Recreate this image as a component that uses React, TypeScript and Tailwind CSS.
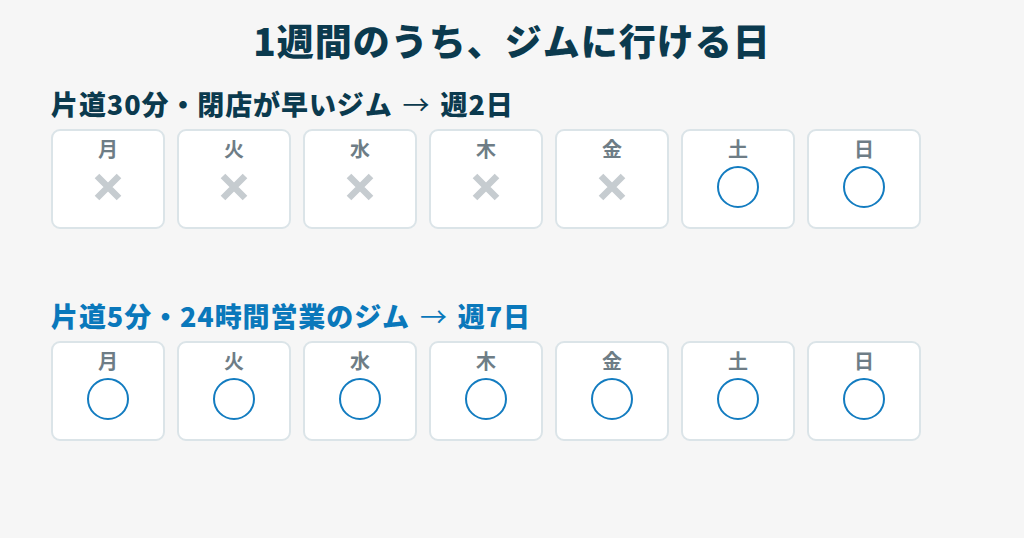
const days = ['月', '火', '水', '木', '金', '土', '日'];

const rows = [
  {
    label: '片道30分・閉店が早いジム',
    result: '週2日',
    color: 'text-[#0b3a4e]',
    open: [false, false, false, false, false, true, true],
  },
  {
    label: '片道5分・24時間営業のジム',
    result: '週7日',
    color: 'text-[#0a78bb]',
    open: [true, true, true, true, true, true, true],
  },
];

function Cross() {
  return (
    <svg width="32" height="32" viewBox="0 0 32 32">
      <path d="M5 5 L27 27 M27 5 L5 27" stroke="#c6ccd0" strokeWidth="6.5" />
    </svg>
  );
}

function DayCard({ day, open }: { day: string; open: boolean }) {
  return (
    <div className="w-[114px] h-[100px] bg-white border-2 border-[#dbe4e8] rounded-[9px] flex flex-col items-center pt-[5px]">
      <span className="text-[20px] leading-[26px] font-bold text-[#6e7d86]">{day}</span>
      <div className="mt-[4px] h-[42px] flex items-center justify-center">
        {open ? (
          <div className="w-[42px] h-[42px] rounded-full border-2 border-[#137cc0]" />
        ) : (
          <Cross />
        )}
      </div>
    </div>
  );
}

export default function App() {
  return (
    <div
      className="min-h-[538px] w-full bg-[#f6f6f6] px-[51px] pt-[16px]"
      style={{ fontFamily: '"Noto Sans CJK JP", "Noto Sans", sans-serif' }}
    >
      <h1 className="text-center text-[37px] leading-[48px] font-black text-[#0b3a4e] tracking-[1px]">
        1週間のうち、ジムに行ける日
      </h1>
      <div className="flex flex-col gap-[69px] mt-[22px]">
        {rows.map((row) => (
          <section key={row.label}>
            <h2 className={`text-[27px] leading-[36px] font-black tracking-[0.9px] ${row.color}`}>
              {row.label}
              <span className="font-normal mx-[10px]">→</span>
              {row.result}
            </h2>
            <div className="flex gap-[12px] mt-[7px]">
              {days.map((d, i) => (
                <DayCard key={d} day={d} open={row.open[i]} />
              ))}
            </div>
          </section>
        ))}
      </div>
    </div>
  );
}
